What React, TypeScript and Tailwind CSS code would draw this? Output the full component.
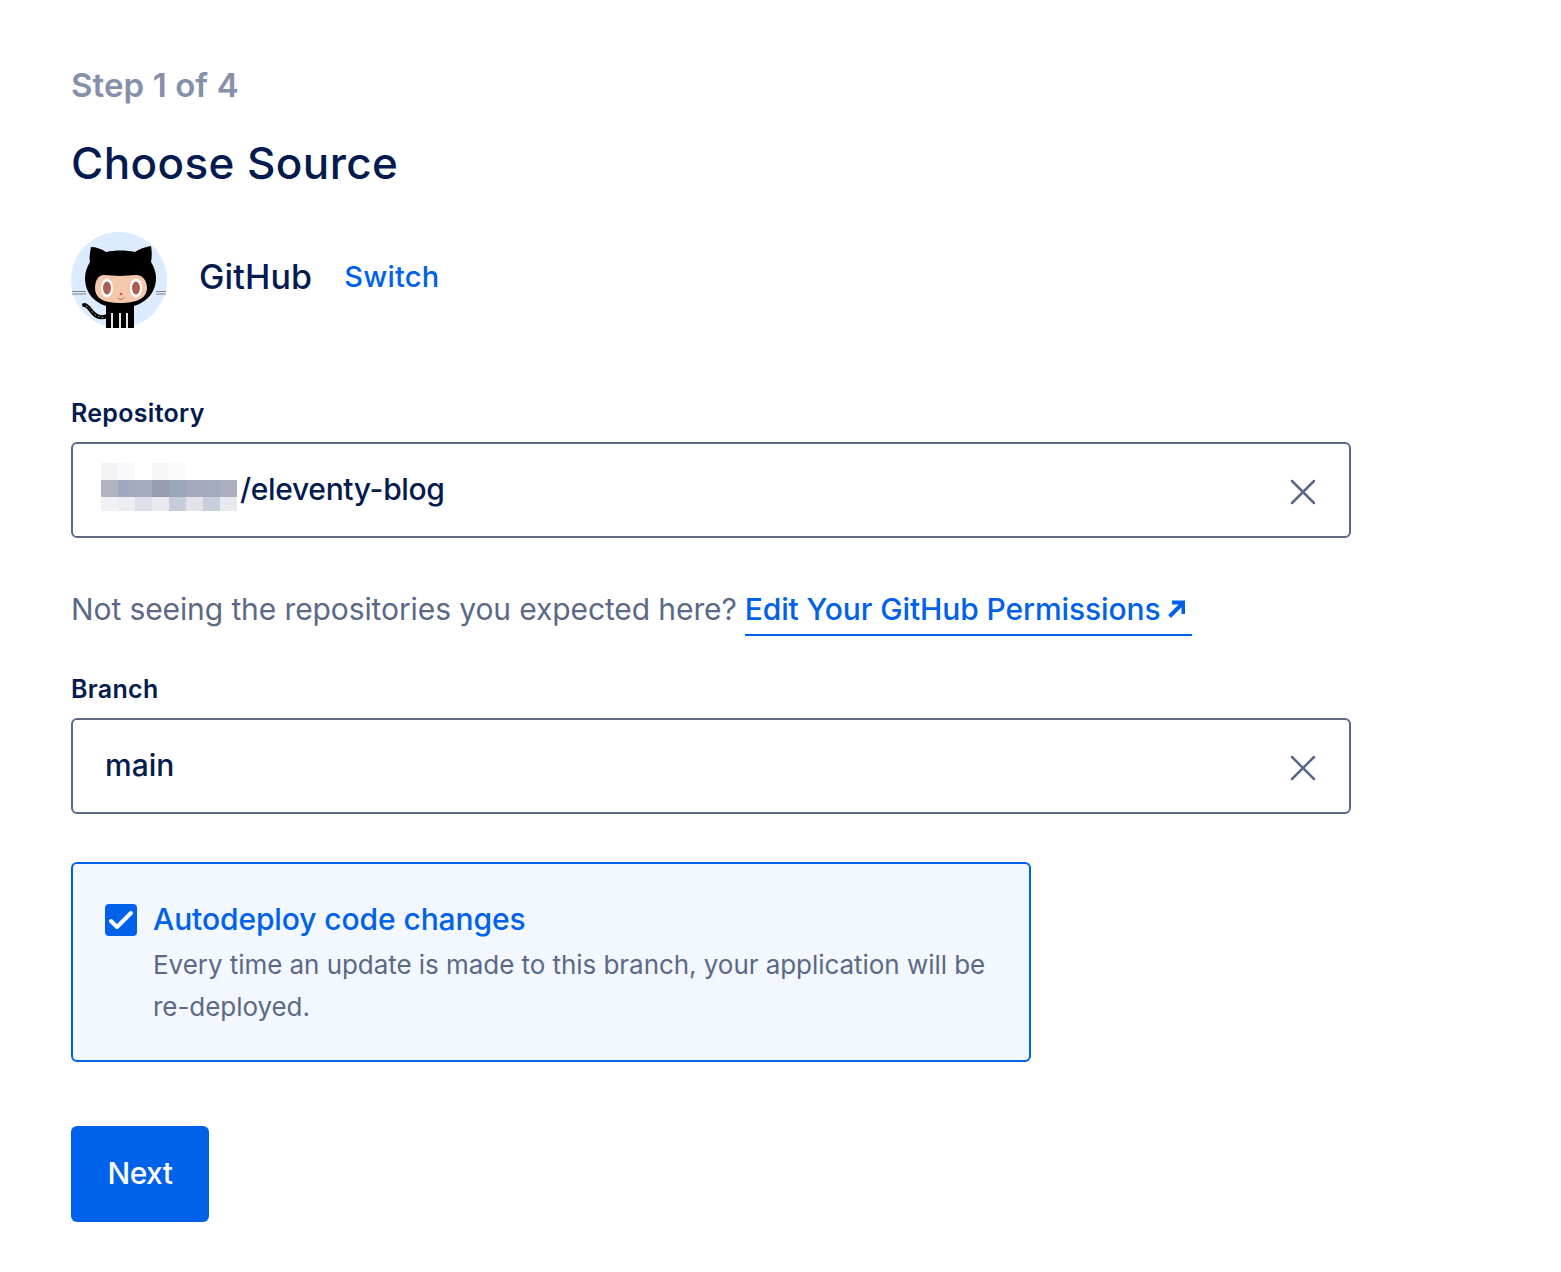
import React from "react";

const blurBlocks = [
  "bg-[#f3f3f6]", "bg-[#f8f9fb]", "bg-white", "bg-[#f7f7f8]", "bg-[#fafafb]", "bg-white", "bg-white", "bg-white",
  "bg-[#b1b3c2]", "bg-[#9faabf]", "bg-[#a3abbf]", "bg-[#989cb0]", "bg-[#9ba6bc]", "bg-[#a5a9bd]", "bg-[#a3abc0]", "bg-[#abafbf]",
  "bg-[#f1f1f5]", "bg-[#eceef4]", "bg-[#dcdfe9]", "bg-[#e8e9ee]", "bg-[#c6ccdb]", "bg-[#e2e3ea]", "bg-[#c9cedc]", "bg-[#e8e9ef]",
];

function Octocat() {
  return (
    <svg width="96" height="96" viewBox="0 0 96 96" className="shrink-0">
      <circle cx="48" cy="48" r="48" fill="#dcebfd" />
      <path d="M1 59.500h14M1 62h14M85 59.500h10M85 62h10" stroke="#6b6b6b" strokeWidth="0.8" />
      <path d="M35 96V70h28v26z" fill="#000" />
      <path d="M41 81v15M49 81v15M56 81v15" stroke="#fff" strokeWidth="1.800" />
      <path d="M36 84c-6 3-10 1-14-3-3-3-5-8-9-8" fill="none" stroke="#000" strokeWidth="4" strokeLinecap="round" />
      <path d="M15 74c4 1 5 5 8 8 4 3 8 4 12 3" fill="none" stroke="#cfe3e8" strokeWidth="0.8" strokeDasharray="1.500 2.500" />
      <path d="M20 15c-1 5-2 11-1 15-3 5-5 10-5 16 0 18 14 30 35 30s36-12 36-30c0-6-2-11-5-16 1-5 1-10 0-16-6 1-12 3-16 6-9-2-20-2-29 0-4-3-10-5-15-5z" fill="#000" />
      <path d="M33 43c5 0 11 1 16 1s11-1 16-1c7 0 11 6 11 13 0 10-10 15-27 15s-25-5-25-15c0-7 3-13 9-13z" fill="#f4c8ac" />
      <ellipse cx="36" cy="56" rx="6" ry="9.500" fill="#fff" />
      <ellipse cx="65" cy="56" rx="6" ry="9.500" fill="#fff" />
      <ellipse cx="36" cy="56" rx="4" ry="6.500" fill="#ab5f52" />
      <ellipse cx="65" cy="56" rx="4" ry="6.500" fill="#ab5f52" />
      <circle cx="50" cy="62" r="1.300" fill="#ab5f52" />
      <path d="M47 65.500c1 2.500 5 2.500 6 0" fill="none" stroke="#ab5f52" strokeWidth="0.9" />
    </svg>
  );
}

function ClearIcon() {
  return (
    <svg width="26" height="26" viewBox="0 0 26 26" fill="none" className="mt-[3px] shrink-0">
      <path d="M2 2l22 22M24 2L2 24" stroke="#5b6987" strokeWidth="2.500" strokeLinecap="round" />
    </svg>
  );
}

export default function App() {
  return (
    <div className="min-h-[1272px] bg-white pl-[71px] pt-[63px] font-['Inter',sans-serif] text-[#031b4e]">
      <div className="text-[33px] leading-[44px] font-semibold tracking-[0.1px] text-[#8690ab]">Step 1 of 4</div>
      <h1 className="mt-[24px] text-[44px] leading-[64px] font-medium tracking-[0.4px]">Choose Source</h1>

      <div className="mt-[37px] flex items-center">
        <Octocat />
        <div className="flex items-center pb-[7px]">
          <span className="ml-[32px] text-[34px] font-medium tracking-[0.15px]">GitHub</span>
          <a className="ml-[32px] text-[29px] font-medium tracking-[0.2px] text-[#0061eb]">Switch</a>
        </div>
      </div>

      <label className="mt-[67px] block text-[25px] leading-[36px] font-semibold tracking-[0.3px]">Repository</label>
      <div className="mt-[11px] flex h-[96px] w-[1280px] items-center justify-between rounded-[6px] border-2 border-[#5b6987] pl-[28px] pr-[33px]">
        <div className="flex items-center">
          <div className="mb-[6px] grid grid-cols-[repeat(8,17px)] grid-rows-[17px_17px_14px]">
            {blurBlocks.map((cls, idx) => (
              <div key={idx} className={cls} />
            ))}
          </div>
          <span className="ml-[3px] pb-[1px] text-[30px] font-medium tracking-[-0.33px]">/eleventy-blog</span>
        </div>
        <ClearIcon />
      </div>

      <p className="mt-[47px] flex items-start text-[30px] leading-[48px] tracking-[-0.1px] text-[#5b6987]">
        Not seeing the repositories you expected here?
        <a className="ml-[8px] flex items-center gap-[6px] border-b-2 border-[#0061eb] pb-[1px] pr-[7px] font-medium text-[#0061eb]">
          Edit Your GitHub Permissions
          <svg width="18" height="18" viewBox="0 0 18 18" fill="none">
            <path d="M2.500 16.500L15 4M5 2.500h11.500v11.500" stroke="#0061eb" strokeWidth="4" />
          </svg>
        </a>
      </p>

      <label className="mt-[35px] block text-[25px] leading-[36px] font-semibold tracking-[0.3px]">Branch</label>
      <div className="mt-[11px] flex h-[96px] w-[1280px] items-center justify-between rounded-[6px] border-2 border-[#5b6987] pl-[32px] pr-[33px]">
        <span className="pb-[1px] text-[30px] font-medium">main</span>
        <ClearIcon />
      </div>

      <div className="mt-[48px] flex h-[200px] w-[960px] items-start gap-[16px] rounded-[6px] border-2 border-[#0061eb] bg-[#f3f7fe] pl-[32px] pt-[33px]">
        <div className="mt-[7px] h-[32px] w-[32px] shrink-0 rounded-[4px] bg-[#0061eb]">
          <svg width="32" height="32" viewBox="0 0 32 32" fill="none">
            <path d="M6 17l6 6L26 9" stroke="#fff" strokeWidth="4" strokeLinecap="round" strokeLinejoin="round" />
          </svg>
        </div>
        <div>
          <div className="text-[30px] leading-[44px] font-medium tracking-[-0.1px] text-[#0061eb]">Autodeploy code changes</div>
          <p className="mt-[3px] w-[840px] text-[26px] leading-[42px] tracking-[-0.05px] text-[#5b6987]">
            Every time an update is made to this branch, your application will be re-deployed.
          </p>
        </div>
      </div>

      <button className="mt-[64px] h-[96px] w-[138px] rounded-[6px] bg-[#0061eb] pb-[2px] text-[30px] font-medium tracking-[-0.55px] text-white">
        Next
      </button>
    </div>
  );
}
